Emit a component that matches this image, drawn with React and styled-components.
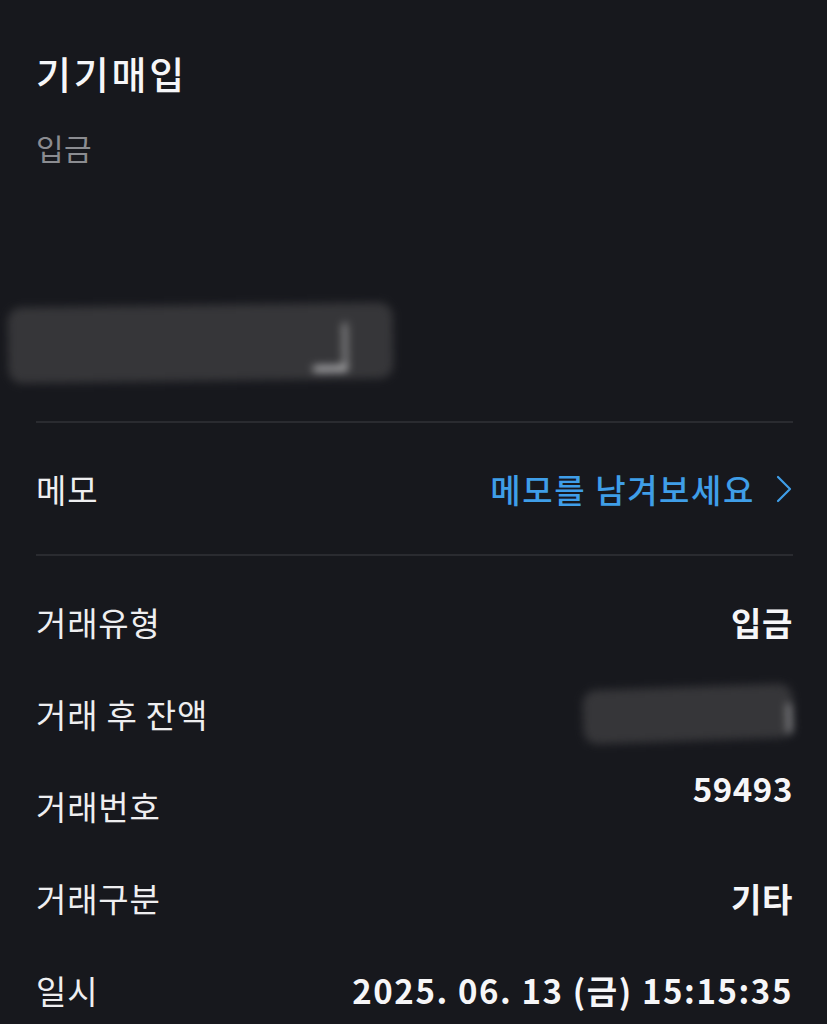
import React from "react";
import styled, { createGlobalStyle } from "styled-components";

const Global = createGlobalStyle`
  html, body { margin: 0; padding: 0; background: #17181d; }
  body { font-family: "Noto Sans CJK KR", "Noto Sans", sans-serif; color: #f4f4f6; }
  * { box-sizing: border-box; }
`;

const Page = styled.div`
  width: 827px;
  min-height: 1024px;
  background: #17181d;
  padding: 49px 34px 0 36px;
  overflow: hidden;
`;

const Title = styled.h1`
  margin: 0;
  font-size: 38px;
  line-height: 48px;
  font-weight: 500;
  color: #f6f6f8;
  letter-spacing: 2.8px;
`;

const Subtitle = styled.div`
  margin-top: 30px;
  font-size: 30px;
  line-height: 40px;
  color: #8b8c91;
  letter-spacing: 0.5px;
`;

const RedactRow = styled.div`
  display: flex;
  justify-content: flex-start;
  margin: 138px 0 40px -28px;
`;

const Redaction = styled.div`
  position: relative;
  width: ${p => p.$w}px;
  height: ${p => p.$h}px;
  background: #363639;
  border-radius: 14px;
  filter: blur(4px);
  transform: rotate(${p => p.$rot || 0}deg);
`;

const Mark = styled.span`
  position: absolute;
  right: ${p => p.$right}px;
  bottom: ${p => p.$bottom}px;
  width: ${p => p.$w}px;
  height: ${p => p.$h}px;
  background: #e8e8ea;
  opacity: ${p => p.$o || 0.85};
`;

const Divider = styled.hr`
  margin: 0;
  border: none;
  height: 2px;
  background: #2a2b30;
`;

const MemoRow = styled.div`
  height: 131px;
  display: flex;
  align-items: center;
  justify-content: space-between;
`;

const Label = styled.span`
  font-size: 33px;
  line-height: 44px;
  color: #eeeef0;
  font-weight: 400;
  letter-spacing: 0.8px;
`;

const MemoLink = styled.span`
  display: flex;
  align-items: center;
  gap: 20px;
  font-size: 33px;
  line-height: 44px;
  color: #3f9ee8;
  font-weight: 500;
  letter-spacing: 1.6px;
`;

const Details = styled.div`
  padding-top: 20px;
  display: flex;
  flex-direction: column;
`;

const Row = styled.div`
  height: 92px;
  display: flex;
  align-items: center;
  justify-content: space-between;
`;

const Value = styled.span`
  font-size: 33px;
  line-height: 44px;
  font-weight: 700;
  color: #f6f6f8;
  letter-spacing: ${p => (p.$wide ? "1.6px" : "0.6px")};
  align-self: ${p => (p.$raised ? "flex-start" : "center")};
  padding-top: ${p => (p.$raised ? "6px" : "0")};
`;

const Chevron = () => (
  <svg width="18" height="30" viewBox="0 0 18 30" fill="none">
    <path d="M3 3 L15 15 L3 27" stroke="#3f9ee8" strokeWidth="2.2" strokeLinecap="round" strokeLinejoin="round" />
  </svg>
);

export default function App() {
  return (
    <>
      <Global />
      <Page>
        <Title>기기매입</Title>
        <Subtitle>입금</Subtitle>
        <RedactRow>
          <Redaction $w={385} $h={76} $rot={-0.8}>
            <Mark $right={46} $bottom={8} $w={34} $h={5} />
            <Mark $right={46} $bottom={12} $w={4} $h={44} $o={0.6} />
          </Redaction>
        </RedactRow>
        <Divider />
        <MemoRow>
          <Label>메모</Label>
          <MemoLink>
            메모를 남겨보세요
            <Chevron />
          </MemoLink>
        </MemoRow>
        <Divider />
        <Details>
          <Row>
            <Label>거래유형</Label>
            <Value>입금</Value>
          </Row>
          <Row>
            <Label>거래 후 잔액</Label>
            <Redaction $w={210} $h={54} $rot={-2}>
              <Mark $right={2} $bottom={4} $w={4} $h={30} $o={0.6} />
            </Redaction>
          </Row>
          <Row>
            <Label>거래번호</Label>
            <Value $raised>59493</Value>
          </Row>
          <Row>
            <Label>거래구분</Label>
            <Value>기타</Value>
          </Row>
          <Row>
            <Label>일시</Label>
            <Value $wide>2025. 06. 13 (금) 15:15:35</Value>
          </Row>
        </Details>
      </Page>
    </>
  );
}
